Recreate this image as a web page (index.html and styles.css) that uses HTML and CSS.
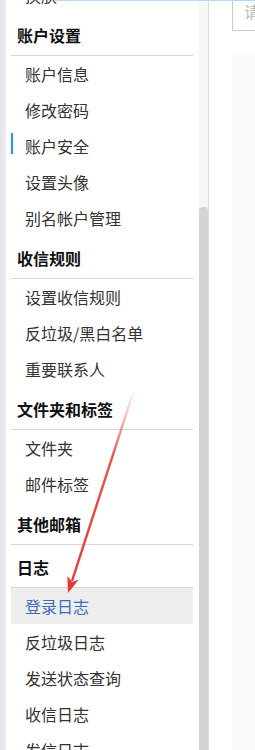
FILE: index.html
```html
<!DOCTYPE html>
<html lang="zh-CN">
<head>
  <meta charset="UTF-8">
  <meta name="viewport" content="width=device-width, initial-scale=1.0">
  <link rel="stylesheet" href="styles.css">
  <title>设置</title>
</head>
<body>
  <div class="edge"></div>
  <div class="sidebar">
    <div class="menu">
      <div class="item">换肤</div>
      <div class="group-title">账户设置</div>
      <div class="item">账户信息</div>
      <div class="item">修改密码</div>
      <div class="item marked">账户安全</div>
      <div class="item">设置头像</div>
      <div class="item">别名帐户管理</div>
      <div class="group-title">收信规则</div>
      <div class="item">设置收信规则</div>
      <div class="item">反垃圾/黑白名单</div>
      <div class="item">重要联系人</div>
      <div class="group-title">文件夹和标签</div>
      <div class="item">文件夹</div>
      <div class="item">邮件标签</div>
      <div class="group-title">其他邮箱</div>
      <div class="group-title">日志</div>
      <div class="item active">登录日志</div>
      <div class="item">反垃圾日志</div>
      <div class="item">发送状态查询</div>
      <div class="item">收信日志</div>
      <div class="item">发信日志</div>
    </div>
  </div>
  <div class="scrollbar"><div class="thumb"></div></div>
  <div class="main">
    <div class="search">请</div>
    <div class="panel"></div>
  </div>
  <div class="topline"></div>
  <svg class="arrow" width="255" height="750" viewBox="0 0 255 750">
    <defs>
      <linearGradient id="fade" x1="134" y1="390" x2="72" y2="582" gradientUnits="userSpaceOnUse">
        <stop offset="0" stop-color="#f03a3a" stop-opacity="0"/>
        <stop offset="0.35" stop-color="#f03a3a" stop-opacity="0.9"/>
        <stop offset="1" stop-color="#ee3535"/>
      </linearGradient>
    </defs>
    <line x1="134" y1="390" x2="72" y2="581" stroke="url(#fade)" stroke-width="2.4"/>
    <polygon points="68,593 78.7,579.7 72,582 67.3,575.9" fill="#ee3535"/>
  </svg>
</body>
</html>
```

FILE: styles.css
```css
body {
  margin: 0;
  width: 255px;
  height: 750px;
  overflow: hidden;
  display: flex;
  position: relative;
  background-color: #fff;
  font-family: "Noto Sans CJK SC", "Noto Sans", sans-serif;
  font-size: 16px;
}

.edge {
  width: 6px;
  flex-shrink: 0;
  background: linear-gradient(to right, #e1e4e9, #eceef1);
}

.sidebar {
  width: 193px;
  flex-shrink: 0;
  overflow: hidden;
  background-color: #fff;
}

.menu {
  margin-top: -23px;
  padding: 0 6px 0 5px;
}

.group-title {
  height: 42px;
  line-height: 44px;
  padding-left: 6px;
  border-bottom: 1px solid #d7d7d7;
  font-weight: bold;
  color: #111;
}

.item {
  position: relative;
  height: 36px;
  line-height: 36px;
  padding-left: 14px;
  color: #333;
  white-space: nowrap;
}

.item.marked::before {
  content: "";
  position: absolute;
  left: 0;
  top: 5px;
  width: 2px;
  height: 21px;
  background-color: #1a9de3;
}

.item.active {
  background-color: #eeeeee;
  color: #3d6db5;
}

.scrollbar {
  width: 9px;
  flex-shrink: 0;
  padding-top: 207px;
  background-color: #f6f6f6;
  border-right: 1px solid #dcdcdc;
}

.thumb {
  height: 600px;
  border-radius: 4px 4px 0 0;
  background-color: #d4d4d4;
}

.main {
  flex: 1;
  padding-left: 23px;
  display: flex;
  flex-direction: column;
}

.search {
  height: 30px;
  margin-top: -1px;
  padding-left: 11px;
  border: 1px solid #cccccc;
  border-right: none;
  line-height: 22px;
  color: #bdbdbd;
}

.panel {
  flex: 1;
  margin-top: 22px;
  margin-right: 1px;
  background-color: #f9fafc;
  border-right: 1px solid #e6e6e8;
}

.topline {
  position: absolute;
  top: 0;
  left: 55px;
  right: 0;
  height: 1px;
  background-color: #b8d8f6;
}

.arrow {
  position: absolute;
  top: 0;
  left: 0;
  pointer-events: none;
}
```
